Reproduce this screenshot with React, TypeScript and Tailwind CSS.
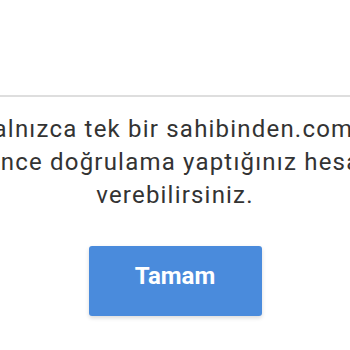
const lines = [
  "Yalnızca tek bir sahibinden.com'a",
  'Daha önce doğrulama yaptığınız hesabınıza',
  'verebilirsiniz.',
];

const App = () => {
  return (
    <div className="w-[350px] h-[350px] overflow-hidden bg-white" style={{ fontFamily: 'Roboto, "Noto Sans", sans-serif' }}>
      <div className="h-[97px] border-b-2 border-[#dedede]" />
      <div className="mt-[16px] flex flex-col items-center">
        {lines.map((line) => (
          <div key={line} className="whitespace-nowrap text-[24px] leading-[33px] tracking-[1.2px] text-[#333333]">
            {line}
          </div>
        ))}
      </div>
      <div className="mt-[34px] flex justify-center">
        <button className="w-[173px] h-[70px] rounded-[3px] bg-[#4a8bdc] pb-[10px] text-[24px] font-bold text-white shadow-[0_2px_4px_rgba(0,0,0,0.15)]">
          Tamam
        </button>
      </div>
    </div>
  );
};

export default App;
